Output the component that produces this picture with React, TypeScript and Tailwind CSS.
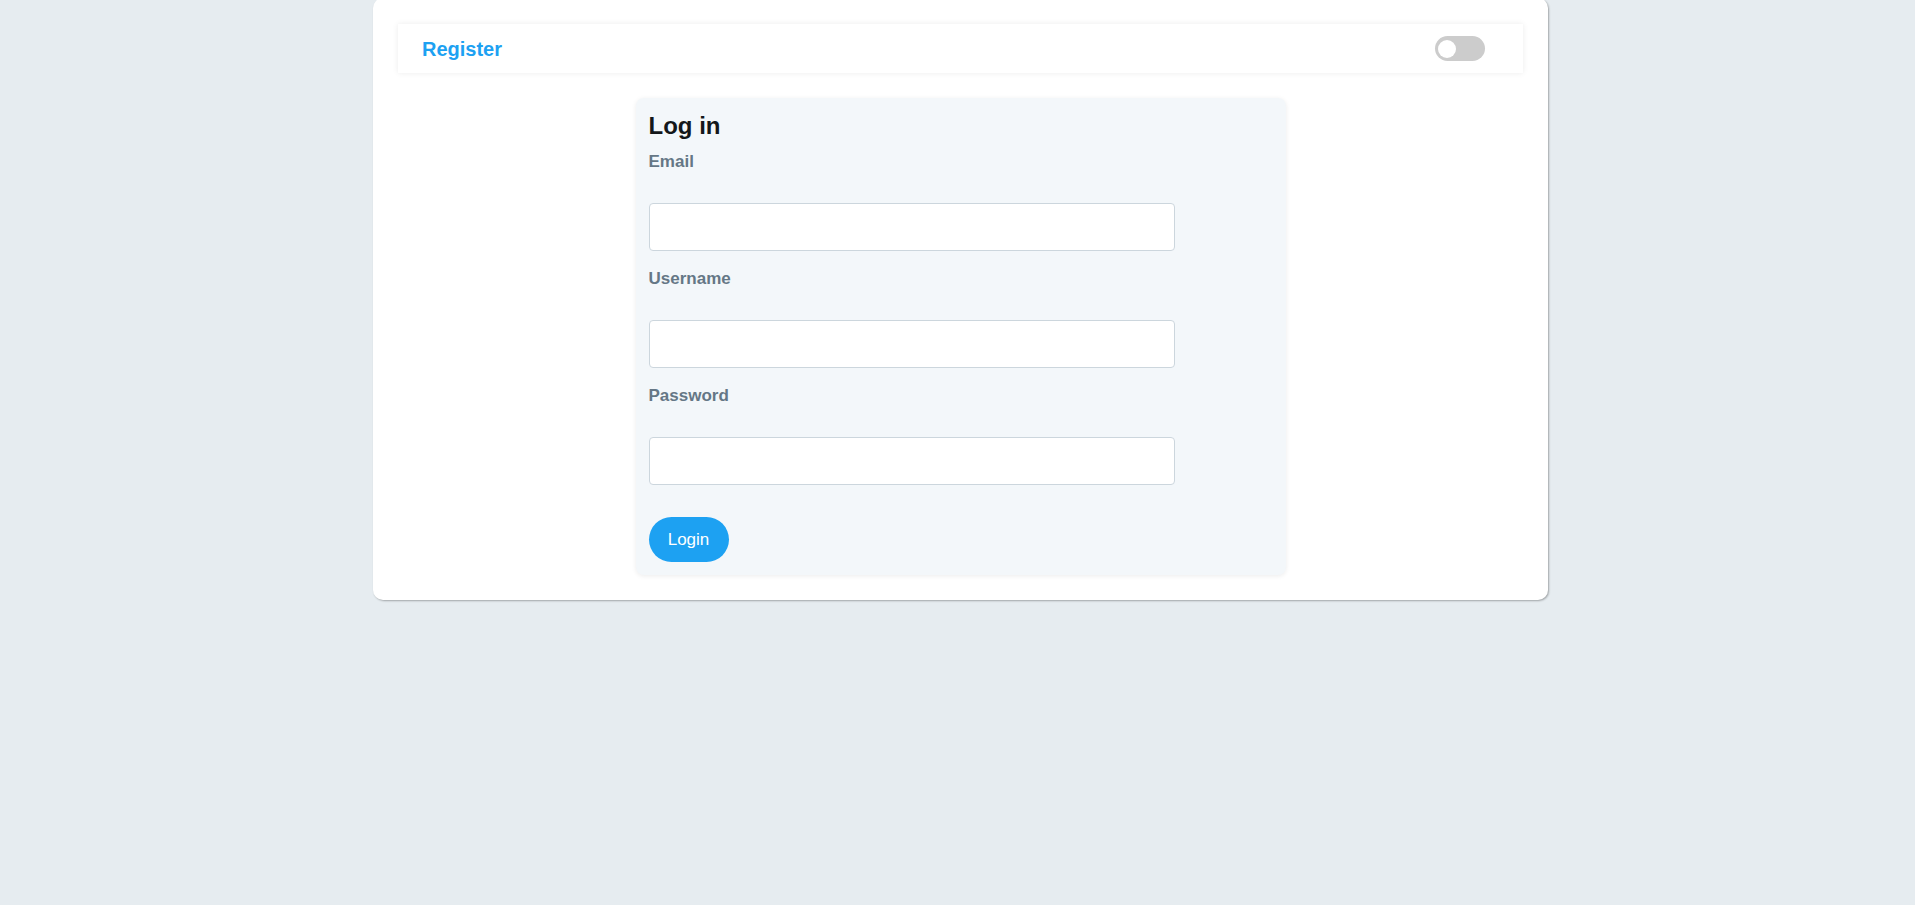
import React from "react";

function Field({ label, type, last }: { label: string; type: string; last?: boolean }) {
  return (
    <div className={last ? "" : "mb-[18px]"}>
      <label className="block text-[17px] leading-[20px] font-bold text-[#657786] mb-[31px]">{label}</label>
      <input
        type={type}
        className="block w-[526px] h-[48px] bg-white border border-[#ccd6dd] rounded-[4px] px-3 text-[16px] outline-none"
      />
    </div>
  );
}

export default function App() {
  return (
    <div className="min-h-[907px] w-full bg-[#e6ecf0] font-['Liberation_Sans',Arial,sans-serif]">
      <div className="ml-[373px] w-[1175px] bg-white rounded-b-[10px] rounded-t-[10px] -mt-[2px] pt-[26px] px-[25px] pb-[25px] shadow-[1px_1px_2px_rgba(0,0,0,0.3)]">
        <div className="h-[49px] flex items-center justify-between pl-[24px] pr-[38px] bg-white shadow-[0_0_6px_rgba(0,0,0,0.08)]">
          <span className="text-[20px] font-bold text-[#1da1f2] leading-[24px]">Register</span>
          <div className="w-[50px] h-[25px] rounded-full bg-[#cccccc] flex items-center pl-[3px]">
            <div className="w-[18px] h-[18px] rounded-full bg-white" />
          </div>
        </div>
        <div className="mt-[25px] mx-auto w-[650px] bg-[#f3f7fa] rounded-[8px] shadow-[0_1px_5px_rgba(0,0,0,0.08)] pt-[14px] pl-[13px] pb-[13px]">
          <h1 className="text-[24px] leading-[28px] font-bold text-[#14171a] mb-[12px]">Log in</h1>
          <Field label="Email" type="email" />
          <Field label="Username" type="text" />
          <Field label="Password" type="password" last />
          <button className="mt-[32px] h-[45px] w-[80px] rounded-full bg-[#1da1f2] text-white text-[17px] flex items-center justify-center">
            Login
          </button>
        </div>
      </div>
    </div>
  );
}
